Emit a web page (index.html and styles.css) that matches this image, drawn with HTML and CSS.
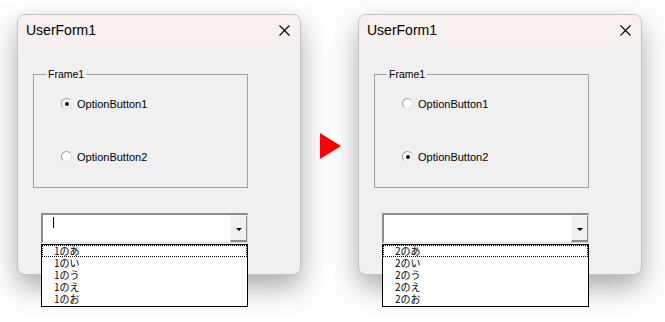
FILE: index.html
```html
<!DOCTYPE html>
<html lang="ja">
<head>
    <meta charset="UTF-8">
    <title>UserForm1</title>
    <link rel="stylesheet" href="styles.css">
</head>
<body>
  <!-- Before -->
  <div class="form">
    <div class="titlebar">
      <span class="title">UserForm1</span>
      <svg class="close" width="11" height="11" viewBox="0 0 11 11"><path d="M0.5 0.5L10.5 10.5M10.5 0.5L0.5 10.5" stroke="#000" stroke-width="1.1" fill="none"/></svg>
    </div>
    <div class="client">
      <fieldset class="frame">
        <legend>Frame1</legend>
        <div class="option"><span class="radio checked"></span>OptionButton1</div>
        <div class="option second"><span class="radio"></span>OptionButton2</div>
      </fieldset>
      <div class="combo">
        <div class="combo-box">
          <div class="combo-field"><span class="caret"></span></div>
          <div class="combo-btn"><span class="arrow"></span></div>
        </div>
        <ul class="combo-list">
          <li class="focused">1のあ</li>
          <li>1のい</li>
          <li>1のう</li>
          <li>1のえ</li>
          <li>1のお</li>
        </ul>
      </div>
    </div>
  </div>

  <div class="next-arrow"></div>

  <!-- After -->
  <div class="form">
    <div class="titlebar">
      <span class="title">UserForm1</span>
      <svg class="close" width="11" height="11" viewBox="0 0 11 11"><path d="M0.5 0.5L10.5 10.5M10.5 0.5L0.5 10.5" stroke="#000" stroke-width="1.1" fill="none"/></svg>
    </div>
    <div class="client">
      <fieldset class="frame">
        <legend>Frame1</legend>
        <div class="option"><span class="radio"></span>OptionButton1</div>
        <div class="option second"><span class="radio checked"></span>OptionButton2</div>
      </fieldset>
      <div class="combo">
        <div class="combo-box">
          <div class="combo-field"></div>
          <div class="combo-btn"><span class="arrow"></span></div>
        </div>
        <ul class="combo-list">
          <li class="focused">2のあ</li>
          <li>2のい</li>
          <li>2のう</li>
          <li>2のえ</li>
          <li>2のお</li>
        </ul>
      </div>
    </div>
  </div>
</body>
</html>
```

FILE: styles.css
```css
/* Page */
html {
    height: 100%;
}

body {
    margin: 0;
    min-height: 100%;
    box-sizing: border-box;
    padding: 14px 0 0 17px;
    background: #ffffff;
    display: flex;
    align-items: flex-start;
    font-family: "Liberation Sans", Arial, sans-serif;
}

/* UserForm window */
.form {
    width: 284px;
    height: 261px;
    box-sizing: border-box;
    border: 1px solid #c4c4c4;
    border-radius: 8px;
    background: #f0f0f0;
    box-shadow: 0 12px 28px rgba(0, 0, 0, 0.34);
    display: flex;
    flex-direction: column;
}

.titlebar {
    height: 30px;
    flex-shrink: 0;
    display: flex;
    align-items: center;
    justify-content: space-between;
    padding: 0 10px 0 8px;
    background: #f8efef;
    border-radius: 7px 7px 0 0;
}

.title {
    font-size: 14px;
    color: #000;
}

.close {
    display: block;
}

.client {
    padding: 22px 0 0 15px;
}

/* Frame */
.frame {
    width: 215px;
    box-sizing: border-box;
    margin: 0;
    padding: 16px 0 24px 12px;
    border: 1px solid #a0a0a0;
}

.frame legend {
    padding: 0 2px;
    font-size: 10.5px;
    line-height: 14px;
}

.option {
    display: flex;
    align-items: center;
    height: 13px;
    margin-left: 15px;
    font-size: 11px;
}

.option.second {
    margin-top: 40px;
}

.radio {
    width: 11px;
    height: 11px;
    box-sizing: border-box;
    margin-right: 5px;
    border-radius: 50%;
    border: 1px solid #a0a0a0;
    border-right-color: #e4e4e4;
    border-bottom-color: #e4e4e4;
    background: #fff;
    position: relative;
}

.radio.checked::after {
    content: "";
    position: absolute;
    left: 2.5px;
    top: 2.5px;
    width: 4px;
    height: 4px;
    border-radius: 50%;
    background: #000;
}

/* ComboBox */
.combo {
    position: relative;
    width: 207px;
    margin: 25px 0 0 8px;
}

.combo-box {
    height: 30px;
    box-sizing: border-box;
    display: flex;
    background: #fff;
    border-top: 2px solid #8c8c8c;
    border-left: 2px solid #8c8c8c;
    border-right: 1px solid #dadada;
    border-bottom: 1px solid #dadada;
}

.combo-field {
    flex: 1;
    padding: 2px 0 0 10px;
}

.caret {
    display: block;
    width: 1px;
    height: 11px;
    background: #000;
}

.combo-btn {
    width: 17px;
    box-sizing: border-box;
    background: #f0f0f0;
    border-top: 1px solid #f8f8f8;
    border-left: 1px solid #f8f8f8;
    border-right: 1px solid #8c8c8c;
    border-bottom: 2px solid #8c8c8c;
    display: flex;
    align-items: center;
    justify-content: center;
    padding-top: 2px;
}

.arrow {
    width: 0;
    height: 0;
    border-left: 3px solid transparent;
    border-right: 3px solid transparent;
    border-top: 3px solid #000;
}

.combo-list {
    position: absolute;
    z-index: 2;
    left: 0;
    top: 31px;
    width: 207px;
    box-sizing: border-box;
    margin: 0;
    padding: 0 0 1px;
    list-style: none;
    background: #fff;
    border: 1px solid #000;
    font-family: "Noto Sans CJK JP", sans-serif;
    font-size: 10px;
    line-height: 12px;
}

.combo-list li {
    height: 12px;
    padding-left: 12px;
}

.combo-list li.focused {
    outline: 1px dotted #000;
    outline-offset: -1px;
}

/* Arrow between the two states */
.next-arrow {
    width: 0;
    height: 0;
    margin: 119px 17px 0 19px;
    border-top: 13px solid transparent;
    border-bottom: 13px solid transparent;
    border-left: 21px solid #ff0000;
}
```
